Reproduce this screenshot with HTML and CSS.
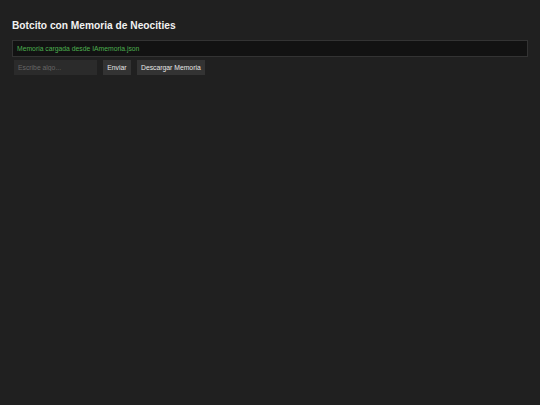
FILE: index.html
```html
<!DOCTYPE html>
<html lang="es">
<head>
<meta charset="utf-8">
<title>Botcito con Memoria de Neocities</title>
<link rel="stylesheet" href="styles.css">
</head>
<body>
<main class="app">
  <h1 class="title">Botcito con Memoria de Neocities</h1>
  <div class="chat">
    <p class="msg">Memoria cargada desde IAmemoria.json</p>
  </div>
  <div class="controls">
    <input class="input" type="text" placeholder="Escribe algo...">
    <button class="btn">Enviar</button>
    <button class="btn">Descargar Memoria</button>
  </div>
</main>
</body>
</html>
```

FILE: styles.css
```css
html, body {
  margin: 0;
  padding: 0;
  background: #202020;
  height: 100%;
}
body {
  font-family: "Liberation Sans", Arial, sans-serif;
  color: #eee;
}
.app {
  padding: 20px 12px;
}
.title {
  margin: 0 0 8px 0;
  font-size: 10.2px;
  line-height: 12px;
  font-weight: bold;
  color: #f2f2f2;
}
.chat {
  background: #121212;
  border: 1px solid #333;
  height: 15px;
  padding: 0 4px;
  display: flex;
  align-items: center;
}
.msg {
  margin: 0;
  font-size: 6.8px;
  color: #4caf50;
}
.controls {
  display: flex;
  gap: 6px;
  margin-top: 3px;
  padding-left: 2px;
}
.input {
  width: 83px;
  height: 15px;
  box-sizing: border-box;
  background: #2b2b2b;
  border: none;
  color: #ddd;
  font-family: "Liberation Sans", Arial, sans-serif;
  font-size: 6.8px;
  padding: 0 4px;
  outline: none;
}
.input::placeholder {
  color: #666;
}
.btn {
  height: 15px;
  box-sizing: border-box;
  background: #333;
  border: none;
  color: #e6e6e6;
  font-family: "Liberation Sans", Arial, sans-serif;
  font-size: 6.8px;
  padding: 0 4.25px;
}
```
